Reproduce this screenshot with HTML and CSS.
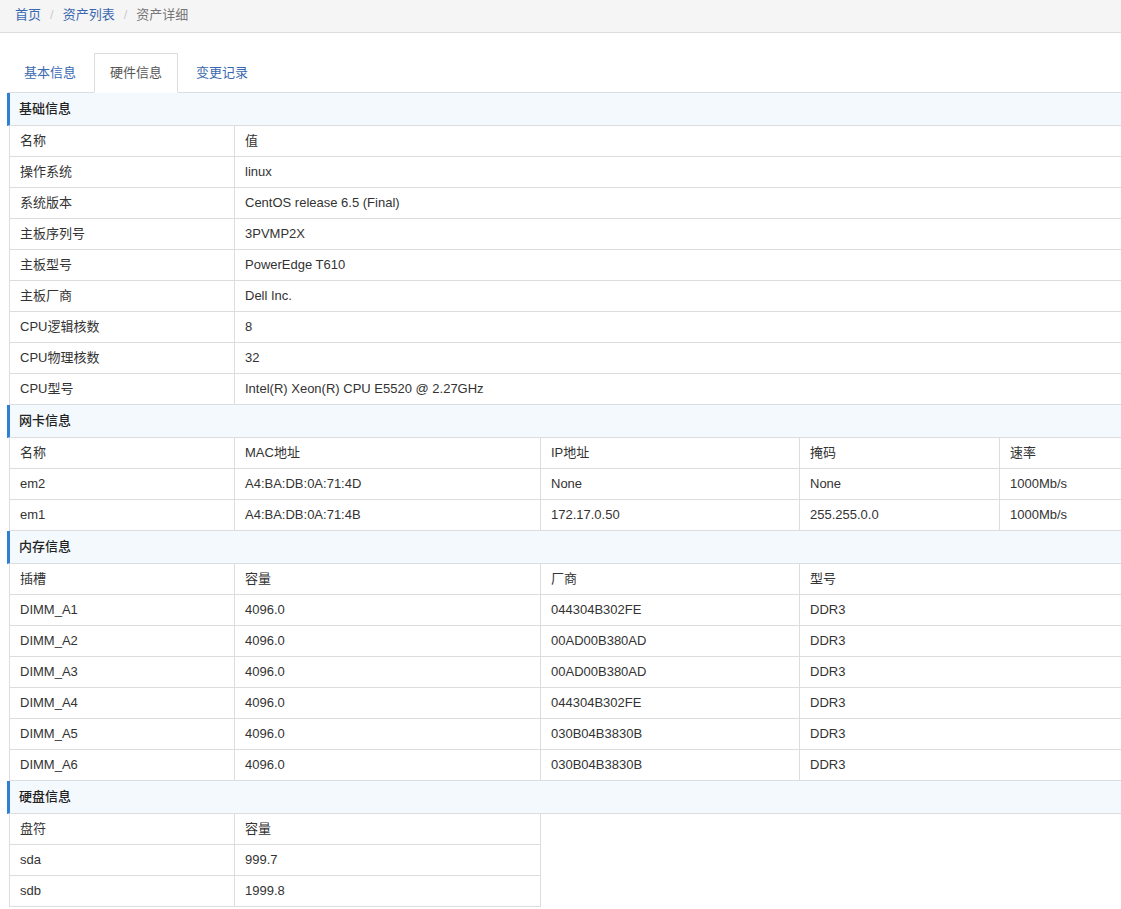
FILE: index.html
```html
<!DOCTYPE html>
<html lang="zh-CN">
<head>
<meta charset="utf-8">
<title>资产详细</title>
<link rel="stylesheet" href="styles.css">
</head>
<body>
<nav class="crumbs">
  <a href="#" class="crumb-link">首页</a><span class="sep">/</span><a href="#" class="crumb-link">资产列表</a><span class="sep">/</span><span class="crumb-current">资产详细</span>
</nav>
<main class="page">
  <ul class="tabs">
    <li class="tab"><a href="#">基本信息</a></li>
    <li class="tab active"><a href="#">硬件信息</a></li>
    <li class="tab"><a href="#">变更记录</a></li>
  </ul>

  <section>
    <div class="sec-title">基础信息</div>
    <div class="grid g-base">
      <div class="c">名称</div><div class="c">值</div>
      <div class="c">操作系统</div><div class="c">linux</div>
      <div class="c">系统版本</div><div class="c">CentOS release 6.5 (Final)</div>
      <div class="c">主板序列号</div><div class="c">3PVMP2X</div>
      <div class="c">主板型号</div><div class="c">PowerEdge T610</div>
      <div class="c">主板厂商</div><div class="c">Dell Inc.</div>
      <div class="c">CPU逻辑核数</div><div class="c">8</div>
      <div class="c">CPU物理核数</div><div class="c">32</div>
      <div class="c">CPU型号</div><div class="c">Intel(R) Xeon(R) CPU E5520 @ 2.27GHz</div>
    </div>
  </section>

  <section>
    <div class="sec-title">网卡信息</div>
    <div class="grid g-net">
      <div class="c">名称</div><div class="c">MAC地址</div><div class="c">IP地址</div><div class="c">掩码</div><div class="c">速率</div>
      <div class="c">em2</div><div class="c">A4:BA:DB:0A:71:4D</div><div class="c">None</div><div class="c">None</div><div class="c">1000Mb/s</div>
      <div class="c">em1</div><div class="c">A4:BA:DB:0A:71:4B</div><div class="c">172.17.0.50</div><div class="c">255.255.0.0</div><div class="c">1000Mb/s</div>
    </div>
  </section>

  <section>
    <div class="sec-title">内存信息</div>
    <div class="grid g-mem">
      <div class="c">插槽</div><div class="c">容量</div><div class="c">厂商</div><div class="c">型号</div>
      <div class="c">DIMM_A1</div><div class="c">4096.0</div><div class="c">044304B302FE</div><div class="c">DDR3</div>
      <div class="c">DIMM_A2</div><div class="c">4096.0</div><div class="c">00AD00B380AD</div><div class="c">DDR3</div>
      <div class="c">DIMM_A3</div><div class="c">4096.0</div><div class="c">00AD00B380AD</div><div class="c">DDR3</div>
      <div class="c">DIMM_A4</div><div class="c">4096.0</div><div class="c">044304B302FE</div><div class="c">DDR3</div>
      <div class="c">DIMM_A5</div><div class="c">4096.0</div><div class="c">030B04B3830B</div><div class="c">DDR3</div>
      <div class="c">DIMM_A6</div><div class="c">4096.0</div><div class="c">030B04B3830B</div><div class="c">DDR3</div>
    </div>
  </section>

  <section>
    <div class="sec-title">硬盘信息</div>
    <div class="grid g-disk">
      <div class="c">盘符</div><div class="c">容量</div>
      <div class="c">sda</div><div class="c">999.7</div>
      <div class="c">sdb</div><div class="c">1999.8</div>
    </div>
  </section>
</main>
</body>
</html>
```
FILE: styles.css
```css
* { box-sizing: border-box; }
html, body { margin: 0; padding: 0; background: #fff; }
body {
  font-family: "Liberation Sans", "Noto Sans CJK SC", sans-serif;
  font-size: 13px;
  color: #333;
  overflow-x: hidden;
}
a { text-decoration: none; color: #3a68b0; }

.crumbs {
  background: #f5f5f5;
  border-bottom: 1px solid #ddd;
  padding: 6px 15px 8px;
  line-height: 18px;
  height: 33px;
}
.crumbs .sep { color: #ccc; padding: 0 9px 0 9px; }
.crumb-current { color: #777; }

.page { margin-left: 8px; }

.tabs {
  list-style: none;
  margin: 20px 0 0;
  padding: 0;
  display: flex;
  border-bottom: 1px solid #ddd;
}
.tab { margin-bottom: -1px; margin-right: 2px; }
.tab a {
  display: block;
  padding: 10px 15px;
  line-height: 18px;
  border: 1px solid transparent;
  color: #3a68b0;
}
.tab.active a {
  color: #555;
  background: #fff;
  border-color: #ddd;
  border-bottom-color: transparent;
}

.sec-title {
  margin-left: -1px;
  background: #f4f9fe;
  border-left: 3px solid #2f80d1;
  border-bottom: 1px solid #ddd;
  padding: 7px 9px;
  line-height: 18px;
  font-weight: 500;
  color: #222;
}

.grid {
  display: grid;
  margin-left: 1px;
  border-left: 1px solid #ddd;
}
.g-base { grid-template-columns: 225px 1fr; }
.g-net { grid-template-columns: 225px 306px 259px 200px 1fr; }
.g-mem { grid-template-columns: 225px 306px 259px 1fr; }
.g-disk { grid-template-columns: 225px 306px; justify-content: start; }

.c {
  padding: 6px 10px;
  line-height: 18px;
  height: 31px;
  border-right: 1px solid #ddd;
  border-bottom: 1px solid #ddd;
  white-space: nowrap;
}
.g-base .c:nth-child(2n) { border-right: none; }
.g-net .c:nth-child(5n) { border-right: none; }
.g-mem .c:nth-child(4n) { border-right: none; }
```
